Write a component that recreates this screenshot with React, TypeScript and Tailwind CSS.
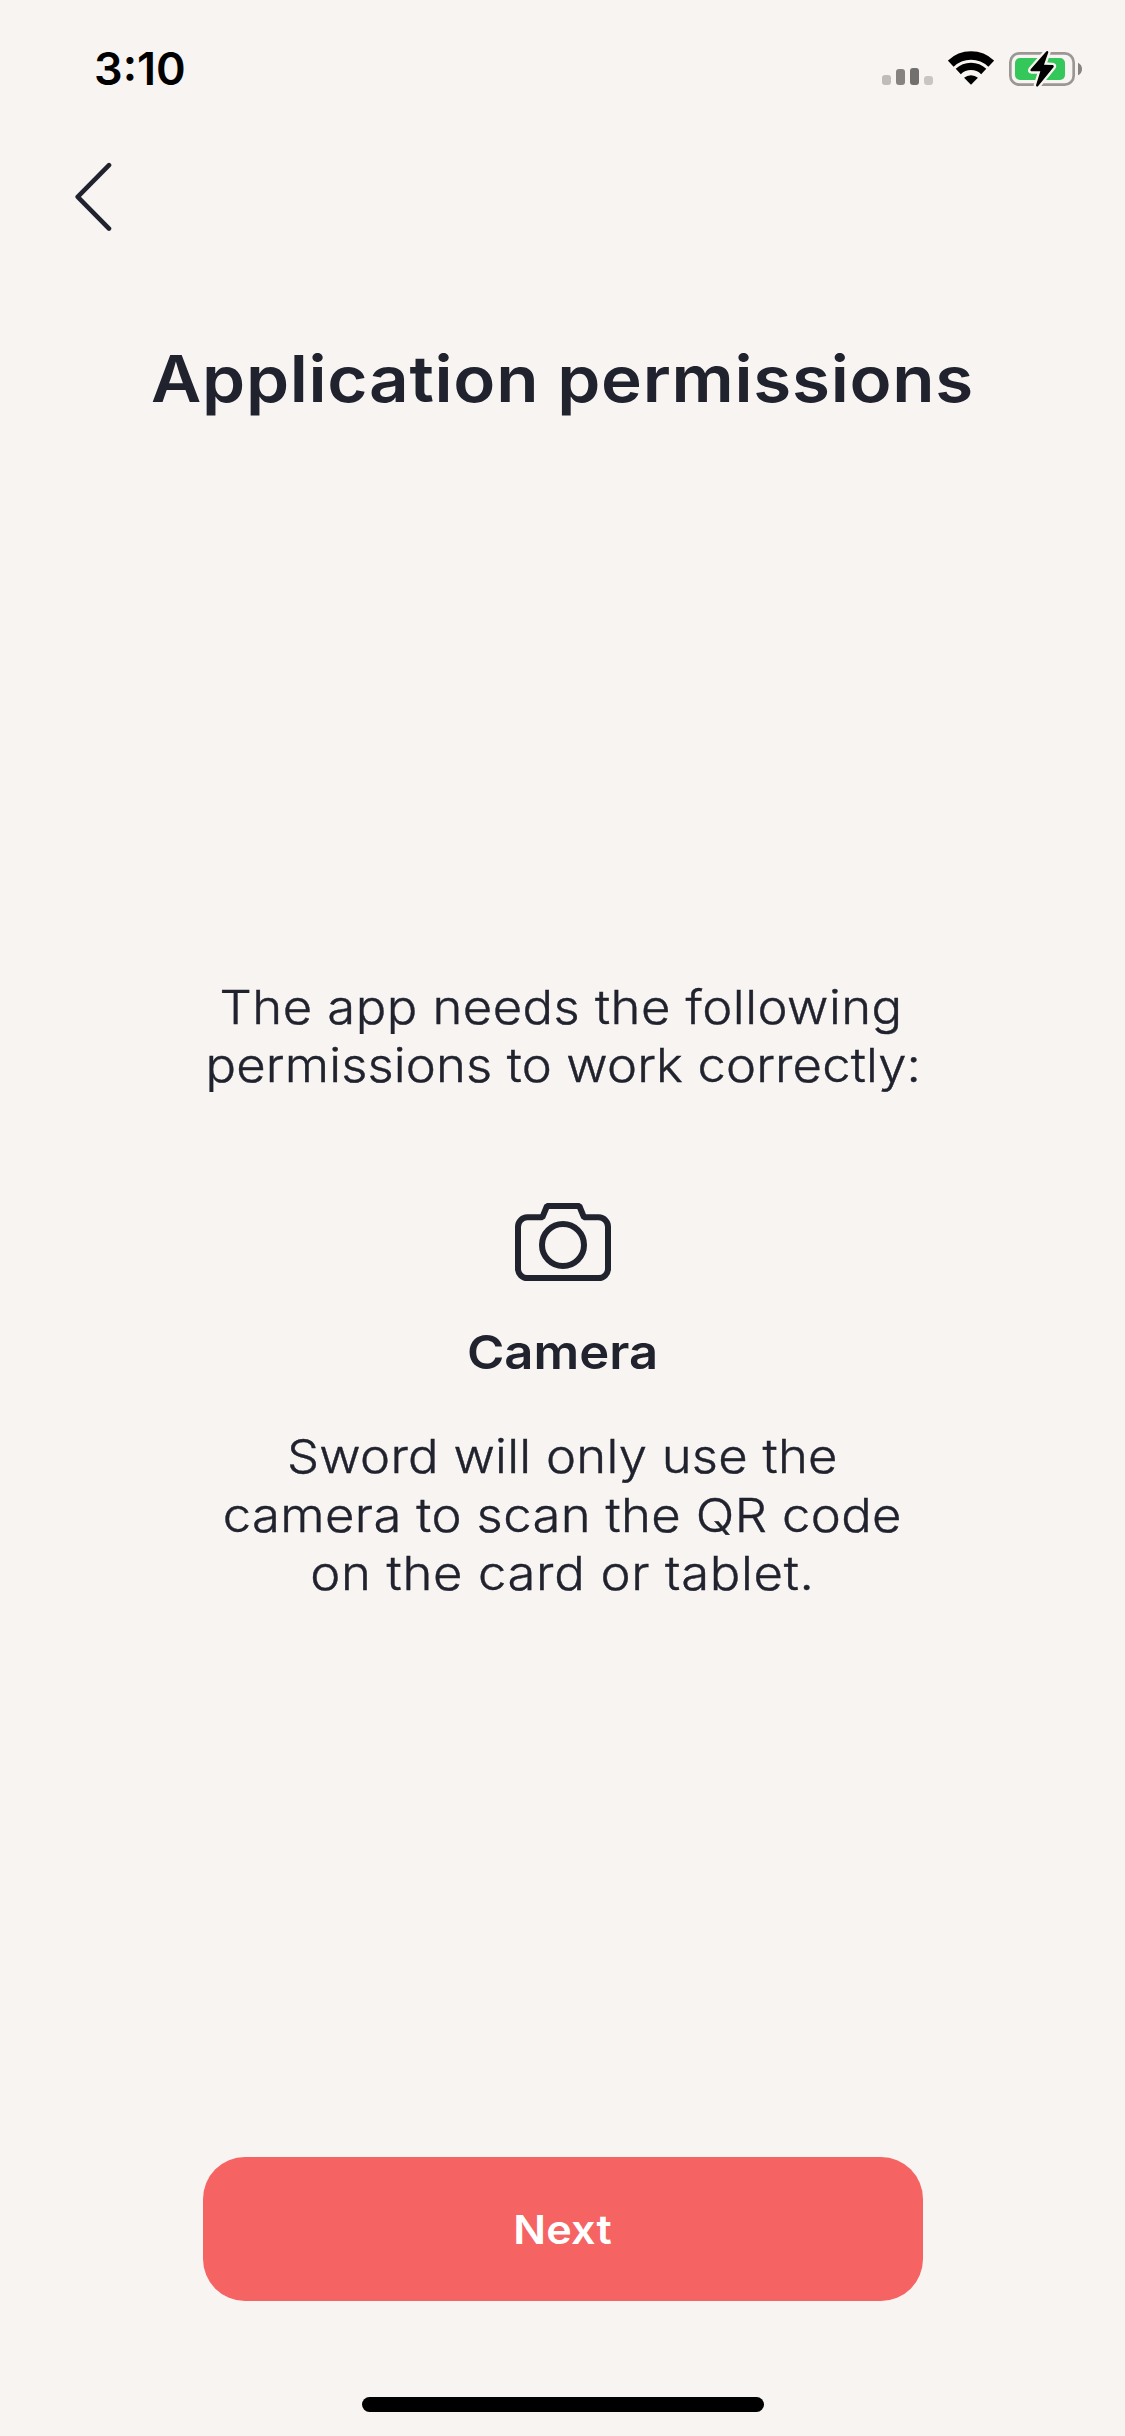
import React from "react";

function SignalIcon() {
  return (
    <div className="flex h-[17px] w-[51px] items-end gap-[5px]" aria-label="Signal">
      <span className="h-[10px] w-[9px] rounded-[3px] bg-[#bfbcba]" />
      <span className="h-[16px] w-[9px] rounded-[3px] bg-[#868381]" />
      <span className="h-[17px] w-[9px] rounded-[3px] bg-[#71706e]" />
      <span className="h-[9px] w-[9px] rounded-[3px] bg-[#c8c5c3]" />
    </div>
  );
}

function WifiIcon() {
  return (
    <svg className="h-[34px] w-[46px]" viewBox="264 64 138 102" fill="none" stroke="#000">
      <path d="M272.2 102.1A87.5 87.5 0 0 1 393.8 102.1" strokeWidth="25" />
      <path d="M294.8 125.5A55 55 0 0 1 371.2 125.5" strokeWidth="22" />
      <path d="M333 165L312.2 144.5A32 32 0 0 1 353.8 144.5Z" fill="#000" stroke="none" />
    </svg>
  );
}

function BatteryIcon() {
  const bolt = "M564 64Q561 61 558 65L512 118Q509 123 514 124L541 124L528 166Q529 172 534 169L581 111Q583 106 578 105L552 104L565 67Z";
  return (
    <svg className="h-[38px] w-[74px]" viewBox="447 60 222 114" fill="none">
      <rect x="451" y="70" width="190" height="94" rx="27" stroke="#9a9795" strokeWidth="8" />
      <rect x="465" y="84" width="150" height="66" rx="15" fill="#34c759" />
      <path d="M654 98Q666 104 666 117Q666 130 654 136Z" fill="#868381" />
      <path d={bolt} stroke="#f8f4f1" strokeWidth="14" strokeLinejoin="round" />
      <path d={bolt} fill="#000" />
    </svg>
  );
}

function StatusBar() {
  return (
    <header className="flex h-[132px] items-start justify-between pl-[94px] pr-[42px] text-black">
      <span className="mt-[42px] text-[45px] font-semibold leading-[54px]">3:10</span>
      <div className="mt-[50px] flex items-start">
        <div className="mt-[18px] mr-[15px]">
          <SignalIcon />
        </div>
        <div className="mt-[1px] mr-[15px]">
          <WifiIcon />
        </div>
        <BatteryIcon />
      </div>
    </header>
  );
}

function CameraIcon() {
  return (
    <svg className="h-[78px] w-[96px]" viewBox="225 69 288 234" fill="none" stroke="currentColor" strokeWidth="18">
      <path d="M262 112H307L321 78H418L432 112H476A28 28 0 0 1 504 140V266A28 28 0 0 1 476 294H262A28 28 0 0 1 234 266V140A28 28 0 0 1 262 112Z" strokeLinejoin="bevel" />
      <circle cx="369" cy="195" r="63" />
    </svg>
  );
}

export default function App() {
  return (
    <div className="flex h-[2436px] w-[1125px] flex-col overflow-hidden bg-[#f8f4f1] font-['Inter',sans-serif] text-[#20222e]">
      <StatusBar />
      <nav className="h-[130px] pt-[30px] pl-[74px]">
        <button className="block" aria-label="Back">
          <svg className="h-[70px] w-[38px]" viewBox="0 0 38 70" fill="none" stroke="currentColor" strokeWidth="4.6" strokeLinecap="round" strokeLinejoin="round">
            <path d="M35 3.2L3.7 34.8L35 66.6" />
          </svg>
        </button>
      </nav>
      <h1 className="mt-[77px] scale-x-108 text-center text-[64px] font-semibold leading-[80px] tracking-[0.66px]">
        Application permissions
      </h1>
      <main className="mt-[559px] flex flex-col items-center text-[47px]">
        <p className="flex scale-x-108 flex-col items-center whitespace-nowrap font-light leading-[58px] [-webkit-text-stroke:0.4px_currentColor]">
          <span className="pr-[2px] tracking-[0.43px]">The app needs the following</span>
          <span className="pl-[2px] tracking-[0.13px]">permissions to work correctly:</span>
        </p>
        <div className="mt-[109px]">
          <CameraIcon />
        </div>
        <h2 className="mt-[42px] scale-x-108 font-semibold leading-[58px] tracking-[0.04px]">Camera</h2>
        <p className="mt-[46px] flex scale-x-108 flex-col items-center whitespace-nowrap font-light leading-[58.5px] [-webkit-text-stroke:0.4px_currentColor]">
          <span className="tracking-[0.24px]">Sword will only use the</span>
          <span className="tracking-[0.35px]">camera to scan the QR code</span>
          <span className="tracking-[0.63px]">on the card or tablet.</span>
        </p>
      </main>
      <footer className="mt-auto flex flex-col items-center pb-[24px]">
        <button className="flex h-[144px] w-[720px] items-center justify-center rounded-[42px] bg-[#f66363] text-[40px] font-semibold text-white">
          <span className="scale-x-108 pt-[2px] leading-[60px] tracking-[0.1px]">Next</span>
        </button>
        <div className="mt-[96px] h-[15px] w-[402px] rounded-full bg-black" />
      </footer>
    </div>
  );
}
